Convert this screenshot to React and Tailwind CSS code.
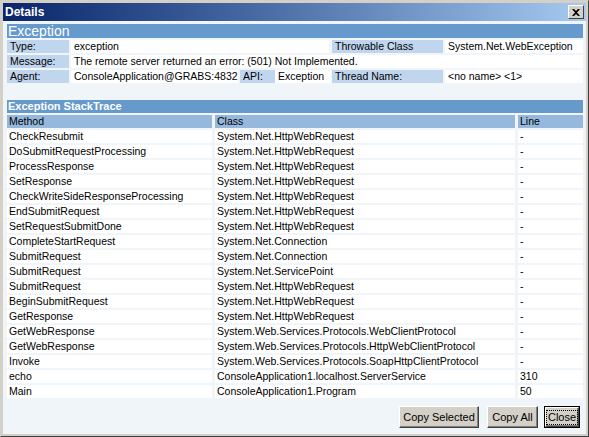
import React from "react";

const INFO_LABEL = "bg-[#c0d6ee] px-[3px] h-[13px] leading-[13px] whitespace-nowrap overflow-hidden";
const INFO_VALUE = "bg-white px-[3px] h-[13px] leading-[13px] whitespace-nowrap overflow-hidden";

const FRAMES = [
  ["CheckResubmit", "System.Net.HttpWebRequest", "-"],
  ["DoSubmitRequestProcessing", "System.Net.HttpWebRequest", "-"],
  ["ProcessResponse", "System.Net.HttpWebRequest", "-"],
  ["SetResponse", "System.Net.HttpWebRequest", "-"],
  ["CheckWriteSideResponseProcessing", "System.Net.HttpWebRequest", "-"],
  ["EndSubmitRequest", "System.Net.HttpWebRequest", "-"],
  ["SetRequestSubmitDone", "System.Net.HttpWebRequest", "-"],
  ["CompleteStartRequest", "System.Net.Connection", "-"],
  ["SubmitRequest", "System.Net.Connection", "-"],
  ["SubmitRequest", "System.Net.ServicePoint", "-"],
  ["SubmitRequest", "System.Net.HttpWebRequest", "-"],
  ["BeginSubmitRequest", "System.Net.HttpWebRequest", "-"],
  ["GetResponse", "System.Net.HttpWebRequest", "-"],
  ["GetWebResponse", "System.Web.Services.Protocols.WebClientProtocol", "-"],
  ["GetWebResponse", "System.Web.Services.Protocols.HttpWebClientProtocol", "-"],
  ["Invoke", "System.Web.Services.Protocols.SoapHttpClientProtocol", "-"],
  ["echo", "ConsoleApplication1.localhost.ServerService", "310"],
  ["Main", "ConsoleApplication1.Program", "50"],
];

function WinButton({ children, isDefault, className }) {
  return (
    <button
      className={
        "h-[22px] bg-[#d4d0c8] text-black text-[11px] leading-none " +
        (isDefault ? "border border-black p-0 " : "") +
        className
      }
    >
      <span className="flex h-full w-full items-center justify-center border-t border-l border-t-white border-l-white border-r border-b border-r-[#404040] border-b-[#404040] shadow-[inset_-1px_-1px_0_#808080]">
        <span className={isDefault ? "outline outline-1 outline-dotted outline-black px-[1px] py-[1px]" : ""}>
          {children}
        </span>
      </span>
    </button>
  );
}

export default function App() {
  return (
    <div
      className="w-[589px] h-[437px] flex flex-col bg-[#d4d0c8] border border-t-[#d4d0c8] border-l-[#d4d0c8] border-r-[#404040] border-b-[#404040] p-[2px] text-black text-[10.5px]"
      style={{ fontFamily: '"Liberation Sans", Arial, sans-serif' }}
    >
      {/* title bar */}
      <div className="h-[18px] shrink-0 flex items-center justify-between bg-gradient-to-r from-[#0a246a] to-[#a6caf0] pl-[2px] pr-[2px]">
        <span className="text-white font-bold text-[12px] leading-none">Details</span>
        <span className="w-[16px] h-[14px] flex items-center justify-center bg-[#d4d0c8] border-t border-l border-t-white border-l-white border-r border-b border-r-[#404040] border-b-[#404040]">
          <svg width="8" height="7" viewBox="0 0 8 7">
            <path d="M0 0h2l2 2 2-2h2L5 3.5 8 7H6L4 5 2 7H0l3-3.5z" fill="#000" />
          </svg>
        </span>
      </div>

      {/* content */}
      <div className="flex-1 flex flex-col bg-[#f0f5fa] border-l border-[#f0f5fa] pl-[3px] pr-[3px] pt-[3px]">
        <div className="h-[14px] bg-[#6699cc] text-white text-[14px] leading-[14px] pl-[1px]">Exception</div>

        <div className="mt-[2px] flex flex-col gap-[2px]">
          <div className="flex">
            <div className={INFO_LABEL + " w-[62px]"}>Type:</div>
            <div className={INFO_VALUE + " w-[258px] ml-[2px]"}>exception</div>
            <div className={INFO_LABEL + " w-[111px] ml-[3px]"}>Throwable Class</div>
            <div className={INFO_VALUE + " flex-1 ml-[2px]"}>System.Net.WebException</div>
          </div>
          <div className="flex">
            <div className={INFO_LABEL + " w-[62px]"}>Message:</div>
            <div className={INFO_VALUE + " flex-1 ml-[2px]"}>The remote server returned an error: (501) Not Implemented.</div>
          </div>
          <div className="flex">
            <div className={INFO_LABEL + " w-[62px]"}>Agent:</div>
            <div className={INFO_VALUE + " w-[167px] ml-[2px]"}>ConsoleApplication@GRABS:4832</div>
            <div className={INFO_LABEL + " w-[35px] ml-[2px]"}>API:</div>
            <div className={INFO_VALUE + " w-[56px]"}>Exception</div>
            <div className={INFO_LABEL + " w-[111px] ml-[1px]"}>Thread Name:</div>
            <div className={INFO_VALUE + " flex-1 ml-[2px]"}>&lt;no name&gt; &lt;1&gt;</div>
          </div>
        </div>

        <div className="mt-[17px] h-[13px] bg-[#6699cc] text-white font-bold text-[11px] leading-[13px] pl-[1px]">
          Exception StackTrace
        </div>

        <div className="mt-[2px] flex flex-col gap-[2px]">
          <div className="flex gap-[3px]">
            <div className="w-[205px] h-[13px] leading-[13px] bg-[#95b8dc] px-[2px]">Method</div>
            <div className="w-[300px] h-[13px] leading-[13px] bg-[#95b8dc] px-[2px]">Class</div>
            <div className="flex-1 h-[13px] leading-[13px] bg-[#95b8dc] px-[2px]">Line</div>
          </div>
          {FRAMES.map(([method, cls, line], i) => (
            <div key={i} className="flex gap-[3px]">
              <div className="w-[205px] h-[13px] leading-[13px] bg-white px-[2px] whitespace-nowrap overflow-hidden">{method}</div>
              <div className="w-[300px] h-[13px] leading-[13px] bg-white px-[2px] whitespace-nowrap overflow-hidden">{cls}</div>
              <div className="flex-1 h-[13px] leading-[13px] bg-white px-[2px]">{line}</div>
            </div>
          ))}
        </div>

        <div className="mt-[8px] flex justify-end pr-[3px]">
          <WinButton className="w-[80px]">Copy Selected</WinButton>
          <WinButton className="w-[51px] ml-[8px]">Copy All</WinButton>
          <WinButton isDefault className="w-[36px] ml-[6px]">Close</WinButton>
        </div>
      </div>
    </div>
  );
}
